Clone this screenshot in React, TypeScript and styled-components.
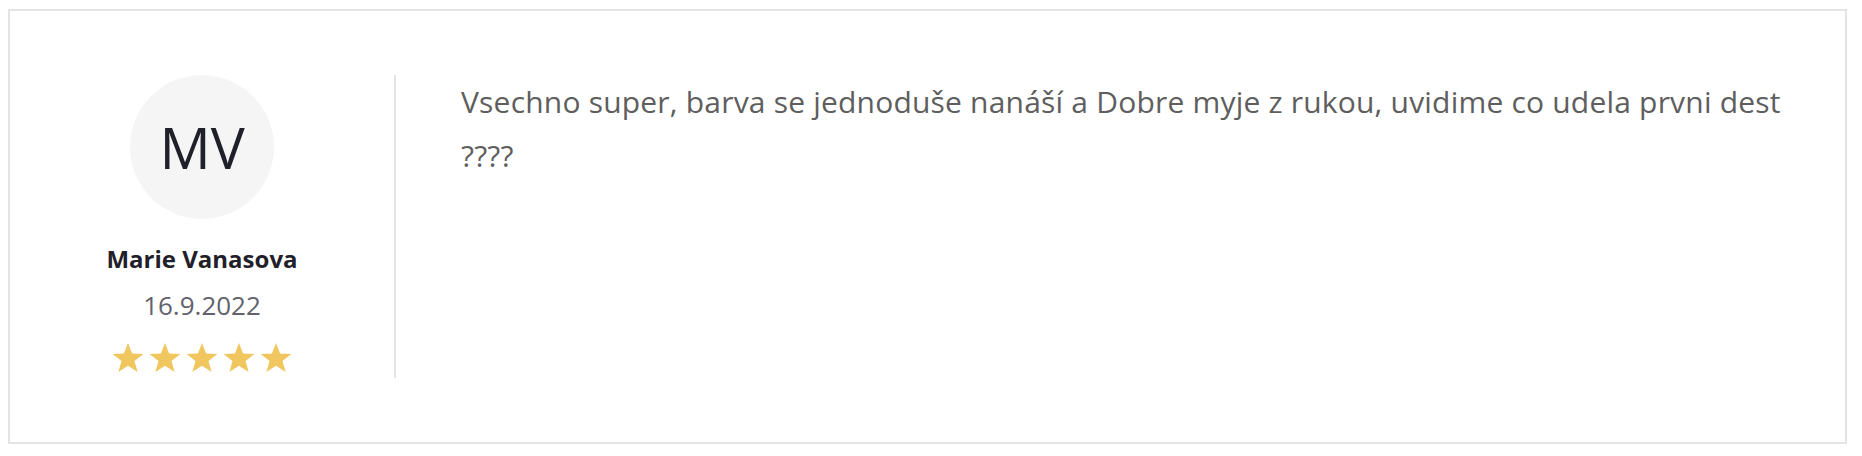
import React from 'react'
import styled, { createGlobalStyle } from 'styled-components'

const GlobalStyle = createGlobalStyle`
  body {
    margin: 8px;
    background: #ffffff;
    font-family: 'Open Sans', 'Noto Sans', sans-serif;
  }
`

const Card = styled.div`
  box-sizing: border-box;
  width: 1839px;
  height: 435px;
  margin-top: 1px;
  border: 2px solid #e4e4e4;
  padding: 64px 0;
  display: flex;
`

const Author = styled.div`
  width: 384px;
  display: flex;
  flex-direction: column;
  align-items: center;
`

const Avatar = styled.div`
  width: 144px;
  height: 144px;
  border-radius: 50%;
  background: #f5f5f5;
  display: flex;
  align-items: center;
  justify-content: center;
  font-size: 57px;
  color: #1f2029;
`

const Name = styled.div`
  margin-top: 22px;
  font-size: 24px;
  font-weight: 700;
  line-height: 36px;
  color: #1f2029;
`

const Date = styled.div`
  margin-top: 10px;
  font-size: 26px;
  line-height: 36px;
  color: #62626c;
`

const Stars = styled.div`
  margin-top: 19px;
  display: flex;
  gap: 3px;
`

const Divider = styled.div`
  width: 2px;
  background: #e4e4e4;
`

const Body = styled.p`
  margin: 0;
  padding: 0 50px 0 65px;
  flex: 1;
  font-size: 30px;
  letter-spacing: 0.2px;
  line-height: 54px;
  color: #5e5e5e;
`

const Star = () => (
  <svg width="34" height="33" viewBox="0 0 24 23">
    <polygon
      fill="#f0c75e"
      points="12,0.5 14.9,8 22.9,8.3 16.6,13.3 18.8,21.1 12,16.6 5.2,21.1 7.4,13.3 1.1,8.3 9.1,8"
    />
  </svg>
)

const review = {
  initials: 'MV',
  name: 'Marie Vanasova',
  date: '16.9.2022',
  rating: 5,
  text: 'Vsechno super, barva se jednoduše nanáší a Dobre myje z rukou, uvidime co udela prvni dest ????',
}

export default function App() {
  return (
    <>
      <GlobalStyle />
      <Card>
        <Author>
          <Avatar>{review.initials}</Avatar>
          <Name>{review.name}</Name>
          <Date>{review.date}</Date>
          <Stars>
            {Array.from({ length: review.rating }).map((_, i) => (
              <Star key={i} />
            ))}
          </Stars>
        </Author>
        <Divider />
        <Body>{review.text}</Body>
      </Card>
    </>
  )
}
